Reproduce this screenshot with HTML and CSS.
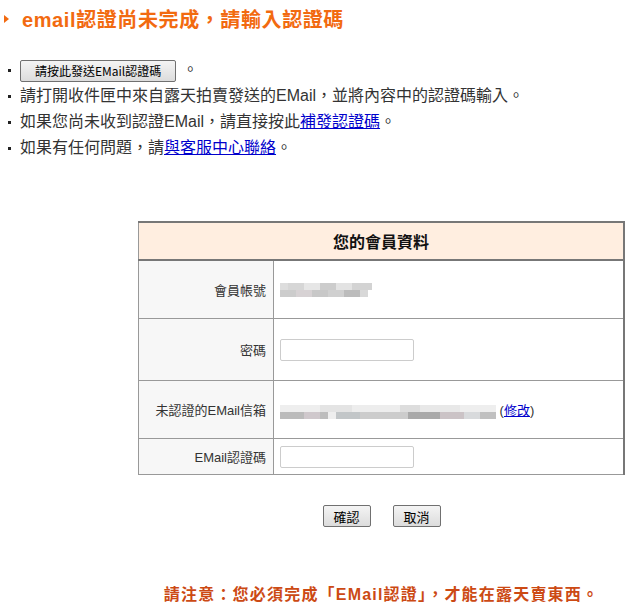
FILE: index.html
```html
<!DOCTYPE html>
<html lang="zh-Hant">
<head>
    <meta charset="UTF-8">
    <title>EMail認證</title>
    <link rel="stylesheet" href="styles.css">
</head>
<body>
    <h1 class="title">email認證尚未完成，請輸入認證碼</h1>
    <ul class="notes">
        <li><button class="send-button">請按此發送EMail認證碼</button><span class="dot">。</span></li>
        <li>請打開收件匣中來自露天拍賣發送的<span class="latin">EMail</span>，並將內容中的認證碼輸入。</li>
        <li>如果您尚未收到認證<span class="latin">EMail</span>，請直接按此<a href="#">補發認證碼</a>。</li>
        <li>如果有任何問題，請<a href="#">與客服中心聯絡</a>。</li>
    </ul>
    <div class="panel">
        <table class="member">
            <tr class="head">
                <th colspan="2">您的會員資料</th>
            </tr>
            <tr class="row-tall">
                <td class="label">會員帳號</td>
                <td class="value"><span class="blur blur-short"></span></td>
            </tr>
            <tr class="row-taller">
                <td class="label">密碼</td>
                <td class="value"><input type="password" class="field"></td>
            </tr>
            <tr class="row-tall">
                <td class="label">未認證的<span class="latin">EMail</span>信箱</td>
                <td class="value"><span class="blur blur-long"></span> (<a href="#">修改</a>)</td>
            </tr>
            <tr class="row-short">
                <td class="label"><span class="latin">EMail</span>認證碼</td>
                <td class="value"><input type="text" class="field"></td>
            </tr>
        </table>
        <div class="actions">
            <button class="small-button">確認</button>
            <button class="small-button">取消</button>
        </div>
        <p class="notice">請注意：您必須完成「<span class="latin">EMail</span>認證」，才能在露天賣東西。</p>
    </div>
</body>
</html>
```
FILE: styles.css
```css
body {
    margin: 0;
    font-family: "Liberation Sans", "Noto Sans CJK TC", sans-serif;
    color: #333;
    background: #fff;
}
a {
    color: #0000cc;
}
.latin {
    font-family: "Liberation Sans", Arial, sans-serif;
}
.title {
    margin: 0;
    padding: 7px 0 0 22px;
    position: relative;
    font-size: 20px;
    line-height: 26px;
    color: #f26a10;
    font-weight: bold;
    letter-spacing: 0.6px;
}
.title::before {
    content: "";
    position: absolute;
    left: 4px;
    top: 15px;
    border-left: 5px solid #f26a10;
    border-top: 4px solid transparent;
    border-bottom: 4px solid transparent;
}
.notes {
    list-style: none;
    margin: 0;
    padding: 24px 0 0 20px;
    font-size: 16px;
}
.notes li {
    position: relative;
    height: 26px;
    line-height: 26px;
}
.notes li::before {
    content: "";
    position: absolute;
    left: -12px;
    top: 12px;
    width: 3px;
    height: 3px;
    background: #222;
}
.send-button {
    font-family: "Noto Sans CJK TC", sans-serif;
    font-size: 12px;
    height: 22px;
    padding: 0 14px;
    border: 1px solid #707070;
    border-radius: 2px;
    background: linear-gradient(#f4f4f4, #dcdcdc);
    color: #000;
    vertical-align: middle;
}
.dot {
    margin-left: 6px;
}
.panel {
    width: 487px;
    margin: 60px 0 0 138px;
}
.member {
    width: 100%;
    border-collapse: collapse;
    border-top: 2px solid #777;
    border-right: 2px solid #777;
    border-left: 1px solid #999;
    border-bottom: 1px solid #999;
    font-size: 13px;
}
.member th {
    height: 34px;
    background: #ffeee0;
    font-size: 16px;
    color: #111;
    border-bottom: 2px solid #777;
}
.member td {
    border: 1px solid #999;
}
.row-tall td {
    height: 57px;
}
.row-taller td {
    height: 61px;
}
.row-short td {
    height: 35px;
}
.label {
    width: 127px;
    padding: 0 7px 0 0;
    text-align: right;
    background: #f7f7f7;
    color: #333;
}
.value {
    padding: 0 6px;
}
.field {
    width: 134px;
    height: 22px;
    box-sizing: border-box;
    border: 1px solid #ccc;
    border-radius: 2px;
    vertical-align: middle;
}
.blur {
    display: inline-block;
    height: 14px;
    vertical-align: middle;
}
.blur-short {
    width: 92px;
    background:
        linear-gradient(90deg, #ddd 0 8px, #d6d6d6 8px 24px, #e6e6e6 24px 40px, #ccc 40px 56px, #e3e3e3 56px 72px, #d3d3d3 72px 92px) top / 100% 7px no-repeat,
        linear-gradient(90deg, #ccc 0 16px, #d7d2d4 16px 32px, #c8c8c8 32px 48px, #d0d0d0 48px 64px, #bcbcbc 64px 80px, #d8d8d8 80px 88px, #fff 88px) bottom / 100% 7px no-repeat;
}
.blur-long {
    width: 216px;
    background:
        linear-gradient(90deg, #eee 0 40px, #e4e4e4 40px 72px, #ededed 72px 120px, #ddd 120px 140px, #e8e8e8 140px 180px, #eee 180px 216px) top / 100% 7px no-repeat,
        linear-gradient(90deg, #bbb 0 24px, #cfc8cc 24px 40px, #bdbdbd 40px 48px, #eee 48px 56px, #c2c6c8 56px 80px, #ccc 80px 128px, #a9a9a9 128px 160px, #cbc3c6 160px 184px, #d8dadc 184px 200px, #c0c0c0 200px 216px) bottom / 100% 7px no-repeat;
}
.actions {
    display: flex;
    justify-content: center;
    gap: 22px;
    margin-top: 30px;
}
.small-button {
    font-family: "Noto Sans CJK TC", sans-serif;
    font-size: 13px;
    width: 48px;
    height: 22px;
    padding: 0;
    border: 1px solid #707070;
    border-radius: 2px;
    background: linear-gradient(#f4f4f4, #dcdcdc);
    color: #000;
}
.notice {
    margin: 54px 0 0;
    text-align: center;
    font-size: 16px;
    font-weight: bold;
    letter-spacing: 1.2px;
    color: #cc4a14;
}
```
